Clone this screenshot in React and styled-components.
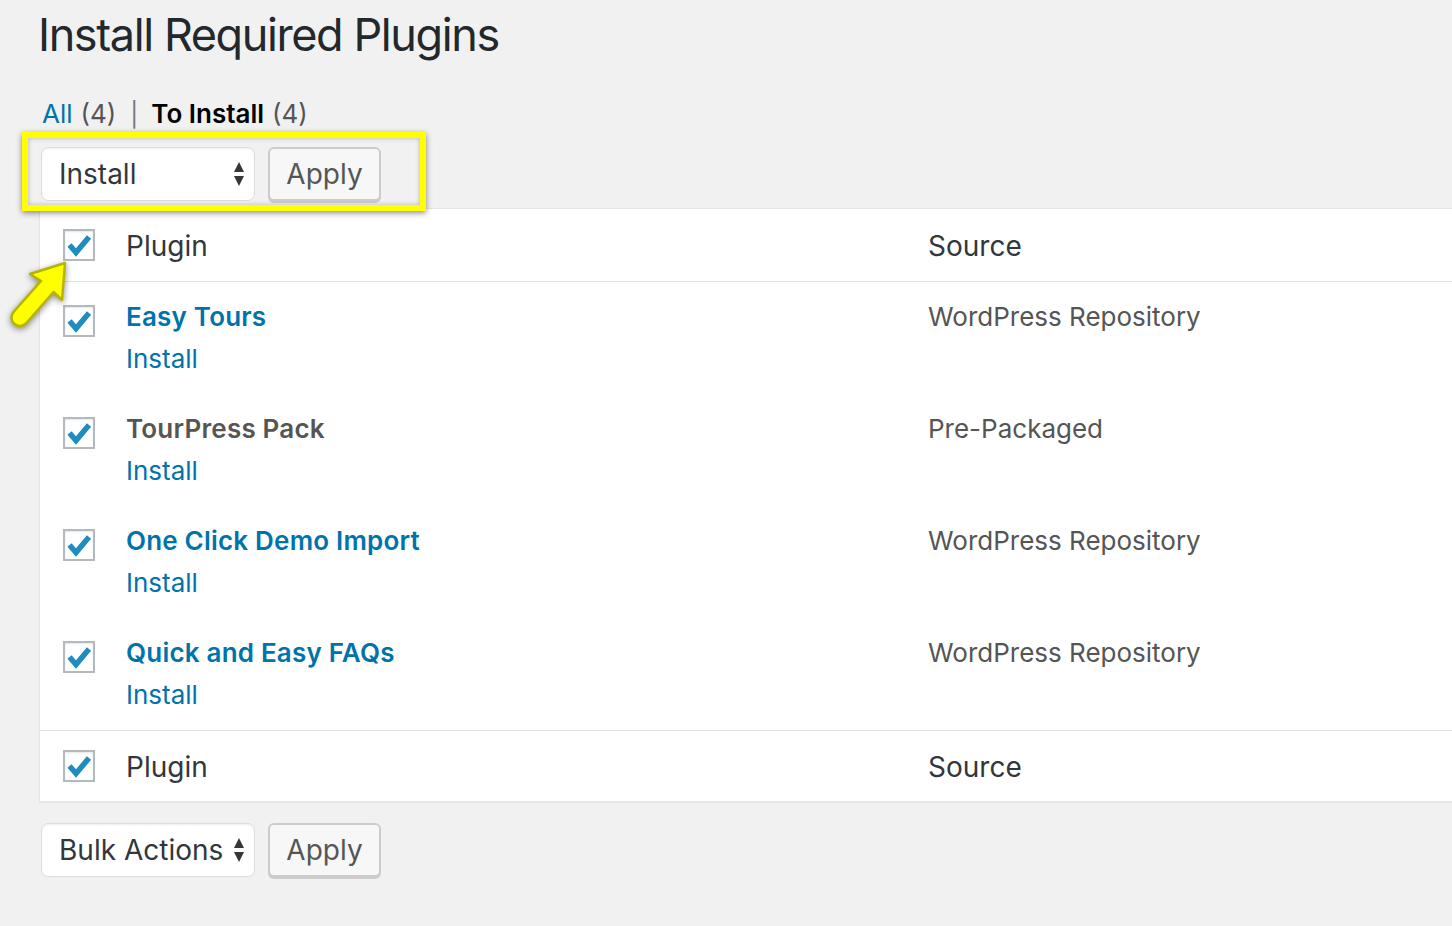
import styled, { createGlobalStyle } from 'styled-components';

const GlobalStyle = createGlobalStyle`
  html, body {
    margin: 0;
    padding: 0;
    background: #f1f1f1;
    overflow-x: hidden;
  }
  body {
    font-family: Inter, "Noto Sans", sans-serif;
    color: #444;
  }
`;

const Wrap = styled.div`
  position: relative;
  padding: 5px 0 40px 39px;
`;

const Title = styled.h1`
  margin: 0 0 0 -1px;
  font-size: 45px;
  letter-spacing: -1.4px;
  line-height: 60px;
  font-weight: 400;
  color: #23282d;
`;

const Views = styled.ul`
  list-style: none;
  margin: 32px 0 0 3px;
  padding: 0;
  display: flex;
  align-items: baseline;
  font-size: 26px;
  line-height: 34px;
  color: #555;
`;

const View = styled.li`
  display: flex;
  gap: 8px;
`;

const Sep = styled.span`
  margin: 0 13px 0 14px;
  color: #777;
  font-size: 24px;
`;

const ViewLink = styled.a`
  color: ${(p) => (p.$current ? '#000' : '#0073aa')};
  font-weight: ${(p) => (p.$current ? 600 : 400)};
  text-decoration: none;
`;

const Count = styled.span`
  color: #555;
`;

const TableNav = styled.div`
  display: flex;
  gap: 13px;
  align-items: flex-start;
  margin: ${(p) => p.$margin};
  padding-left: 2px;
  height: ${(p) => p.$height || 'auto'};
`;

const SelectBox = styled.div`
  box-sizing: border-box;
  width: 214px;
  height: 54px;
  display: flex;
  align-items: center;
  justify-content: space-between;
  padding: 0 9px 0 17px;
  background: #fff;
  border: 1px solid #ddd;
  border-radius: 7px;
  box-shadow: inset 0 1px 2px rgba(0, 0, 0, 0.07);
  font-size: 28px;
  color: #32373c;
`;

const Button = styled.button`
  box-sizing: border-box;
  width: 113px;
  height: 54px;
  background: #f7f7f7;
  border: 2px solid #ccc;
  border-radius: 6px;
  box-shadow: 0 2px 0 #ccc;
  font-family: inherit;
  font-size: 28px;
  color: #555;
  padding: 0;
  cursor: pointer;
`;

const Table = styled.div`
  background: #fff;
  border: 1px solid #e5e5e5;
  border-right: none;
  box-shadow: 0 1px 1px rgba(0, 0, 0, 0.04);
  margin-right: -20px;
`;

const Row = styled.div`
  display: grid;
  grid-template-columns: 86px 802px 1fr;
  align-items: ${(p) => (p.$head ? 'center' : 'start')};
  height: ${(p) => p.$height};
  box-sizing: border-box;
  padding: ${(p) => (p.$head ? '0' : '14px 0')};
  border-bottom: ${(p) => (p.$top ? '1px solid #e1e1e1' : 'none')};
  border-top: ${(p) => (p.$bottom ? '1px solid #e1e1e1' : 'none')};
`;

const CheckCell = styled.div`
  padding-left: 23px;
  padding-top: ${(p) => (p.$head ? '0' : '9px')};
  display: flex;
`;

const HeadText = styled.div`
  font-size: 28px;
  line-height: 36px;
  padding-top: 2px;
  color: #32373c;
`;

const Cell = styled.div`
  display: flex;
  flex-direction: column;
  font-size: 26px;
  line-height: 42px;
  color: #555;
`;

const Name = styled.a`
  font-weight: 600;
  letter-spacing: 0.2px;
  color: ${(p) => (p.$link ? '#0073aa' : '#555')};
  text-decoration: none;
`;

const Action = styled.a`
  color: #0073aa;
  text-decoration: none;
`;

const Box = styled.span`
  box-sizing: border-box;
  width: 32px;
  height: 32px;
  border: 2px solid #b4b9be;
  background: #fff;
  box-shadow: inset 0 1px 2px rgba(0, 0, 0, 0.1);
  display: flex;
  align-items: center;
  justify-content: center;
`;

const Highlight = styled.div`
  position: absolute;
  left: 22px;
  top: 132px;
  width: 404px;
  height: 79px;
  box-sizing: border-box;
  border: 6px solid #ffff00;
  box-shadow: 0 2px 6px rgba(0, 0, 0, 0.45), inset 0 0 5px rgba(0, 0, 0, 0.25);
  pointer-events: none;
`;

const Arrow = styled.svg`
  position: absolute;
  left: 0;
  top: 250px;
  filter: drop-shadow(0 2px 3px rgba(0, 0, 0, 0.45));
  pointer-events: none;
`;

const Checkbox = () => (
  <Box>
    <svg width="28" height="28" viewBox="0 0 28 28">
      <path d="M4.5 14 L11 21.5 L24 6" fill="none" stroke="#1e8cbe" strokeWidth="5.5" strokeLinejoin="miter" />
    </svg>
  </Box>
);

const Arrows = () => (
  <svg width="12" height="26" viewBox="0 0 12 26">
    <path d="M1 11 L6 1 L11 11 Z" fill="#32373c" />
    <path d="M1 15 L6 25 L11 15 Z" fill="#32373c" />
  </svg>
);

const plugins = [
  { name: 'Easy Tours', link: true, source: 'WordPress Repository' },
  { name: 'TourPress Pack', link: false, source: 'Pre-Packaged' },
  { name: 'One Click Demo Import', link: true, source: 'WordPress Repository' },
  { name: 'Quick and Easy FAQs', link: true, source: 'WordPress Repository' },
];

const App = () => (
  <>
    <GlobalStyle />
    <Wrap>
      <Title>Install Required Plugins</Title>
      <Views>
        <View>
          <ViewLink href="#">All</ViewLink>
          <Count>(4)</Count>
        </View>
        <Sep>|</Sep>
        <View>
          <ViewLink href="#" $current>To Install</ViewLink>
          <Count>(4)</Count>
        </View>
      </Views>
      <TableNav $margin="15px 0 0" $height="61px">
        <SelectBox>
          Install
          <Arrows />
        </SelectBox>
        <Button>Apply</Button>
      </TableNav>
      <Table>
        <Row $head $top $height="73px">
          <CheckCell $head>
            <Checkbox />
          </CheckCell>
          <HeadText>Plugin</HeadText>
          <HeadText>Source</HeadText>
        </Row>
        {plugins.map((p) => (
          <Row key={p.name} $height="112px">
            <CheckCell>
              <Checkbox />
            </CheckCell>
            <Cell>
              <Name href="#" $link={p.link}>{p.name}</Name>
              <Action href="#">Install</Action>
            </Cell>
            <Cell>{p.source}</Cell>
          </Row>
        ))}
        <Row $head $bottom $height="71px">
          <CheckCell $head>
            <Checkbox />
          </CheckCell>
          <HeadText>Plugin</HeadText>
          <HeadText>Source</HeadText>
        </Row>
      </Table>
      <TableNav $margin="21px 0 0">
        <SelectBox>
          Bulk Actions
          <Arrows />
        </SelectBox>
        <Button>Apply</Button>
      </TableNav>
      <Highlight />
      <Arrow width="80" height="90" viewBox="0 250 80 90">
        <path
          d="M65 263 L30 274 L41 281 L13.5 312 A8.5 8.5 0 0 0 26 323.5 L53.5 292 L62 300 Z"
          fill="#ffff00"
          stroke="#b5b500"
          strokeWidth="2.5"
          strokeLinejoin="round"
        />
      </Arrow>
    </Wrap>
  </>
);

export default App;
